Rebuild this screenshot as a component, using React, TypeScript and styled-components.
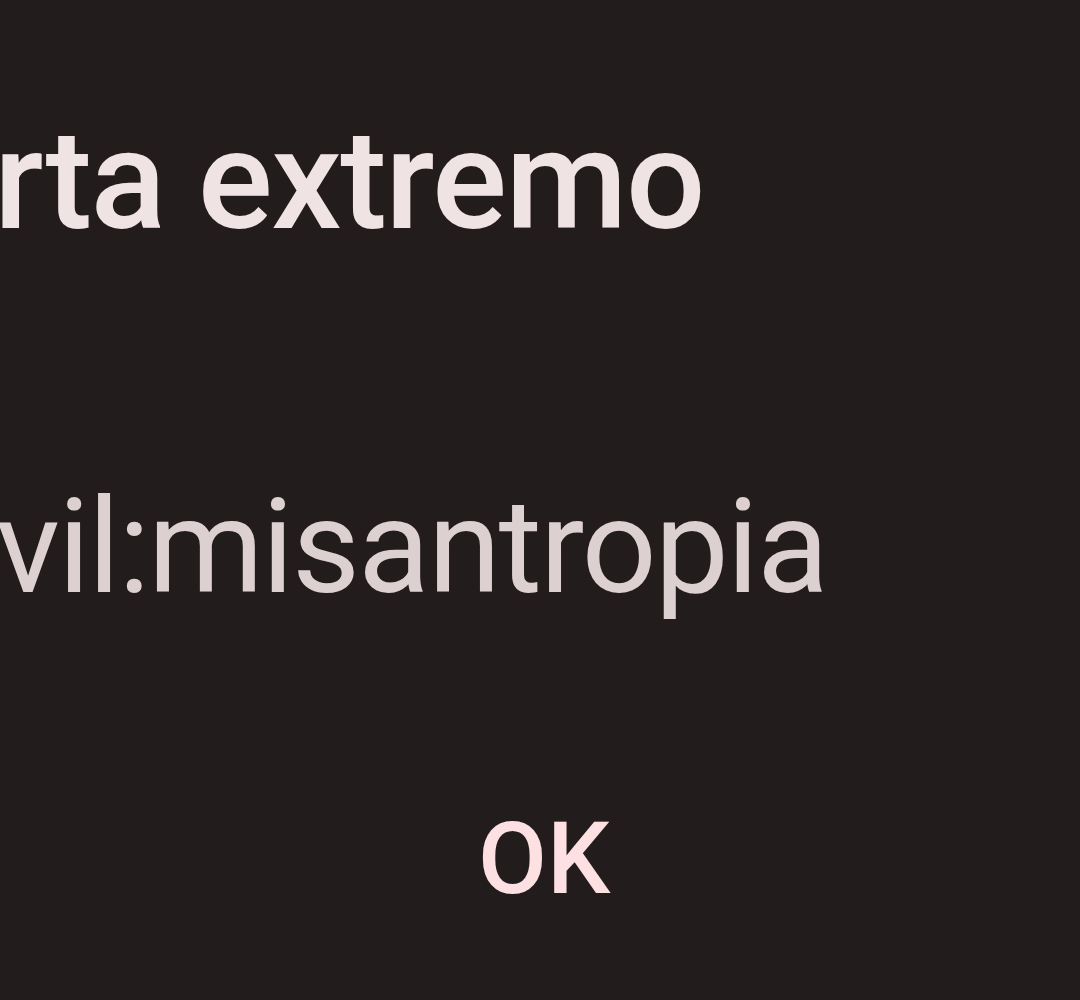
import React from 'react'
import styled, { createGlobalStyle } from 'styled-components'

const GlobalStyle = createGlobalStyle`
	html, body {
		margin: 0;
		padding: 0;
		background: #231c1d;
		overflow: hidden;
	}
`

const Dialog = styled.div`
	width: 1080px;
	height: 1000px;
	background: #231c1d;
	font-family: Roboto, 'Noto Sans', sans-serif;
	display: flex;
	flex-direction: column;
	overflow: hidden;
`

const Title = styled.h1`
	margin: 105px 0 0 -6px;
	font-size: 140px;
	font-weight: 500;
	line-height: 150px;
	letter-spacing: -1.5px;
	color: #f0e3e3;
	white-space: nowrap;
`

const Message = styled.p`
	margin: 217px 0 0 -4px;
	font-size: 132px;
	font-weight: 400;
	line-height: 150px;
	letter-spacing: -2px;
	color: #ddd0d1;
	white-space: nowrap;
`

const Actions = styled.div`
	display: flex;
	margin-top: 182px;
	padding-left: 478px;
`

const TextButton = styled.button`
	background: none;
	border: none;
	padding: 0;
	font-family: inherit;
	font-size: 100px;
	font-weight: 500;
	line-height: 110px;
	color: #fde0e2;
	cursor: pointer;
`

export default function App() {
	return (
		<>
			<GlobalStyle />
			<Dialog>
				<Title>rta extremo</Title>
				<Message>vil:misantropia</Message>
				<Actions>
					<TextButton>OK</TextButton>
				</Actions>
			</Dialog>
		</>
	)
}
